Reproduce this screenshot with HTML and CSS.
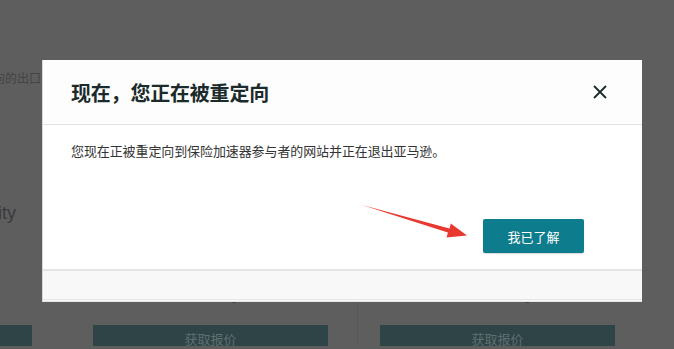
FILE: index.html
```html
<!DOCTYPE html>
<html>
<head>
    <title>重定向提示</title>
    <link rel="stylesheet" href="styles.css">
</head>
<body>
    <div class="page">
        <div class="intro"><span>保险加速器参与者网站正被重定向的出口</span></div>
        <div class="edge-title"><span>Cyber Liability</span></div>

        <div class="cards">
            <div class="card card-first">
                <div class="card-title">&nbsp;</div>
                <div class="clip"><div class="quote">获取报价</div></div>
            </div>
            <div class="card card-mid">
                <div class="card-title">Coalition Insurance Quote</div>
                <div class="quote">获取报价</div>
            </div>
            <div class="card card-last">
                <div class="card-title">Embroker Insurance Quote</div>
                <div class="quote">获取报价</div>
            </div>
        </div>
    </div>

    <div class="modal">
        <div class="modal-header">
            <h2>现在，您正在被重定向</h2>
            <button class="close" aria-label="关闭">
                <svg width="14" height="14" viewBox="0 0 14 14">
                    <path d="M1 1 L13 13 M13 1 L1 13" stroke="#1b2b2b" stroke-width="1.8" fill="none"/>
                </svg>
            </button>
        </div>
        <div class="modal-body">
            <p>您现在正被重定向到保险加速器参与者的网站并正在退出亚马逊。</p>
            <div class="actions">
                <button class="ok">我已了解</button>
            </div>
        </div>
        <div class="modal-footer"></div>
    </div>

    <svg class="arrow" width="674" height="349" viewBox="0 0 674 349">
        <polygon points="362,205 449.5,228.4 450.8,223.4 467,235.6 446.6,237.6 447.9,232.6" fill="#e8382f"/>
    </svg>
</body>
</html>
```

FILE: styles.css
```css
body { margin: 0; background: #5e5e5e; font-family: "Noto Sans CJK SC", "Noto Sans", sans-serif; overflow: hidden; height: 349px; }
.page { padding-top: 70px; height: 279px; overflow: hidden; }
.intro { width: 41px; display: flex; justify-content: flex-end; overflow: hidden; white-space: nowrap; font-size: 12px; line-height: 16px; color: #444; }
.edge-title { width: 16px; margin-top: 116px; display: flex; justify-content: flex-end; overflow: hidden; white-space: nowrap; font-family: "Liberation Sans", Arial, sans-serif; font-size: 18px; line-height: 22px; color: #3a3a3a; }

.cards { display: grid; grid-template-columns: 46px 311px 1fr; margin-top: 61px; }
.card-first { padding-right: 14px; }
.card-mid { padding-left: 47px; }
.card-last { padding-left: 22px; border-left: 1px solid #585858; }
.card-title { font-family: "Liberation Sans", Arial, sans-serif; font-size: 15px; line-height: 20px; color: #3c3c3c; white-space: nowrap; height: 20px; }
.clip { display: flex; justify-content: flex-end; overflow: hidden; margin-top: 20px; }
.clip .quote { margin-top: 0; flex: none; width: 235px; }
.card-mid .quote, .card-last .quote { width: 235px; }
.quote { margin-top: 20px; background: #2e4447; color: #5f6f71; font-size: 13px; text-align: center; padding: 6px 0 0; line-height: 15px; height: 21px; box-sizing: border-box; overflow: hidden; }

.modal { position: absolute; left: 42px; top: 60px; width: 600px; background: #fdfdfd; border-left: 1px solid #d8d8d8; box-sizing: border-box; }
.modal-header { height: 64px; display: flex; align-items: center; justify-content: space-between; padding: 0 35px 0 28px; border-bottom: 1px solid #e2e2e2; }
.modal-header h2 { margin: 0; font-size: 20px; font-weight: bold; color: #1b2b2b; letter-spacing: -0.2px; }
.close { background: none; border: none; padding: 0; width: 14px; height: 14px; cursor: pointer; display: flex; }
.modal-body { background: #fff; padding: 16px 58px 16px 28px; }
.modal-body p { margin: 0; font-size: 13px; line-height: 20px; color: #333; letter-spacing: -0.1px; }
.actions { display: flex; justify-content: flex-end; margin-top: 58px; }
.ok { width: 101px; height: 34px; background: #0d7c8c; color: #fff; border: none; border-radius: 2px; font-family: inherit; font-size: 13px; cursor: pointer; box-shadow: 0 1px 1px rgba(0, 0, 0, 0.15); }
.modal-footer { height: 28px; background: #f8f8f8; border-top: 2px solid #e4e4e4; border-bottom: 3px double #e6e6e6; }

.arrow { position: absolute; left: 0; top: 0; pointer-events: none; }
```
